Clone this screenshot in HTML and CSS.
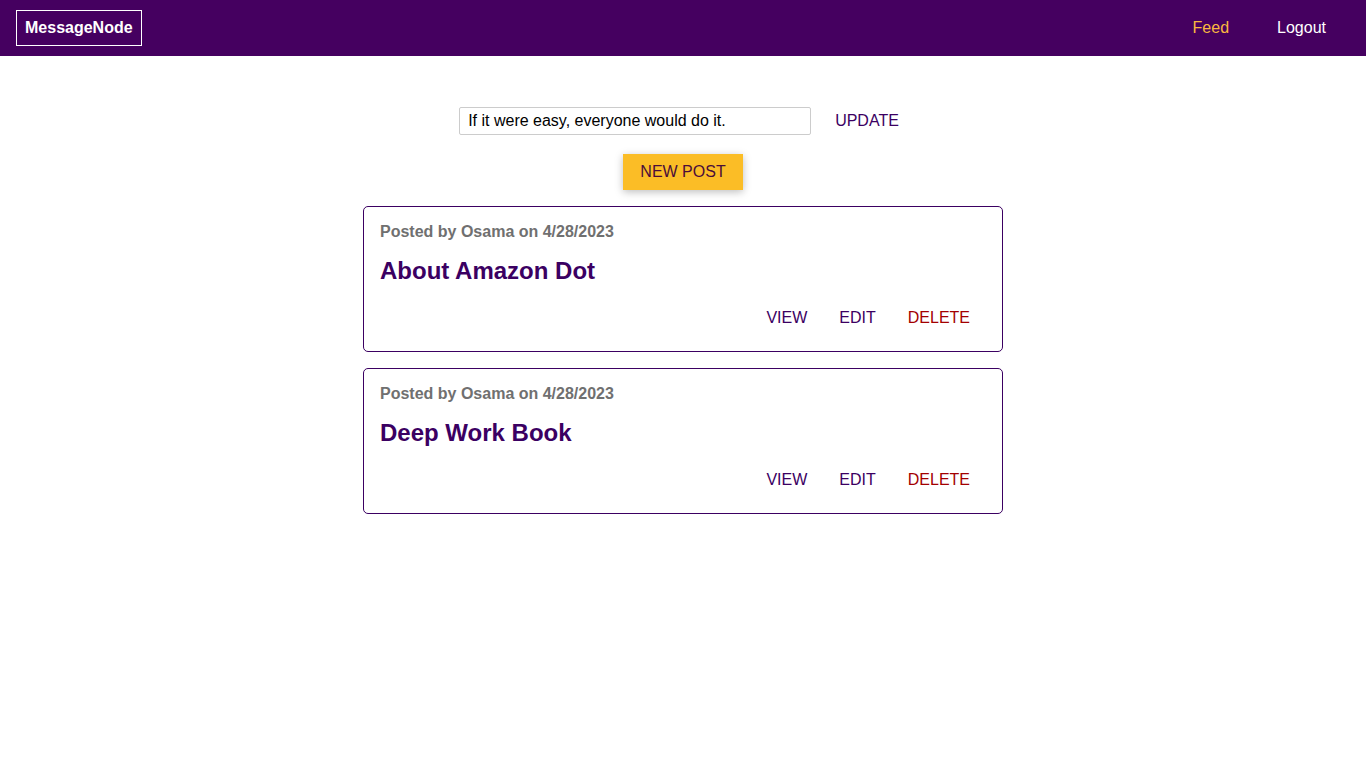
FILE: index.html
```html
<!DOCTYPE html>
<html lang="en">
<head>
<meta charset="utf-8">
<title>MessageNode</title>
<link rel="stylesheet" href="styles.css">
</head>
<body>
<header class="main-header">
  <div class="logo">MessageNode</div>
  <nav class="main-nav">
    <a class="nav-link nav-link--active" href="#">Feed</a>
    <a class="nav-link" href="#">Logout</a>
  </nav>
</header>
<main class="feed">
  <section class="status">
    <input class="status__input" type="text" value="If it were easy, everyone would do it.">
    <button class="button button--flat">UPDATE</button>
  </section>
  <section class="feed__control">
    <button class="button button--accent">NEW POST</button>
  </section>
  <section class="posts">
    <article class="post">
      <p class="post__meta">Posted by Osama on 4/28/2023</p>
      <h1 class="post__title">About Amazon Dot</h1>
      <div class="post__actions">
        <button class="button button--flat">VIEW</button>
        <button class="button button--flat">EDIT</button>
        <button class="button button--flat button--danger">DELETE</button>
      </div>
    </article>
    <article class="post">
      <p class="post__meta">Posted by Osama on 4/28/2023</p>
      <h1 class="post__title">Deep Work Book</h1>
      <div class="post__actions">
        <button class="button button--flat">VIEW</button>
        <button class="button button--flat">EDIT</button>
        <button class="button button--flat button--danger">DELETE</button>
      </div>
    </article>
  </section>
</main>
</body>
</html>
```

FILE: styles.css
```css
* { box-sizing: border-box; }
html, body {
  margin: 0;
  padding: 0;
  font-family: "Liberation Sans", Arial, sans-serif;
  font-size: 16px;
  background: #ffffff;
}
.main-header {
  height: 56px;
  background: #450060;
  display: flex;
  align-items: center;
  justify-content: space-between;
  padding: 0 16px;
}
.logo {
  color: #ffffff;
  font-weight: bold;
  border: 1px solid #ffffff;
  padding: 8px 8px;
  line-height: 18px;
}
.main-nav {
  display: flex;
}
.nav-link {
  color: #ffffff;
  text-decoration: none;
  padding: 0 24px;
  line-height: 18px;
}
.nav-link--active {
  color: #fab83f;
}
.feed {
  width: 640px;
  margin: 0 auto;
  padding-top: 48px;
}
.status {
  display: flex;
  justify-content: center;
  align-items: center;
  gap: 8px;
  padding-left: 8px;
}
.status__input {
  width: 352px;
  height: 28px;
  border: 1px solid #cccccc;
  border-radius: 2px;
  padding: 4px 8px;
  font: inherit;
  color: #000000;
  outline: none;
}
.button {
  font: inherit;
  border: 1px solid #3b0062;
  color: #3b0062;
  background: #ffffff;
  border-radius: 3px;
  padding: 7px 16px;
  line-height: 18px;
  cursor: pointer;
}
.button--flat {
  border: none;
  background: transparent;
  padding: 8px 16px;
}
.button--danger {
  color: #a30000;
}
.button--accent {
  background: #fbbd26;
  border-color: #fbbd26;
  color: #4a0d3a;
  border-radius: 0;
  padding: 8px 16px;
  box-shadow: 0 2px 8px rgba(0, 0, 0, 0.26);
}
.feed__control {
  display: flex;
  justify-content: center;
  margin-top: 16px;
}
.post {
  margin: 16px 0;
  border: 1px solid #3b0062;
  border-radius: 5px;
  padding: 16px;
}
.post__meta {
  margin: 0;
  font-size: 16px;
  line-height: 18px;
  font-weight: bold;
  color: #707070;
}
.post__title {
  margin: 16px 0;
  font-size: 24px;
  line-height: 28px;
  color: #3b0062;
}
.post__actions {
  display: flex;
  justify-content: flex-end;
}
```
